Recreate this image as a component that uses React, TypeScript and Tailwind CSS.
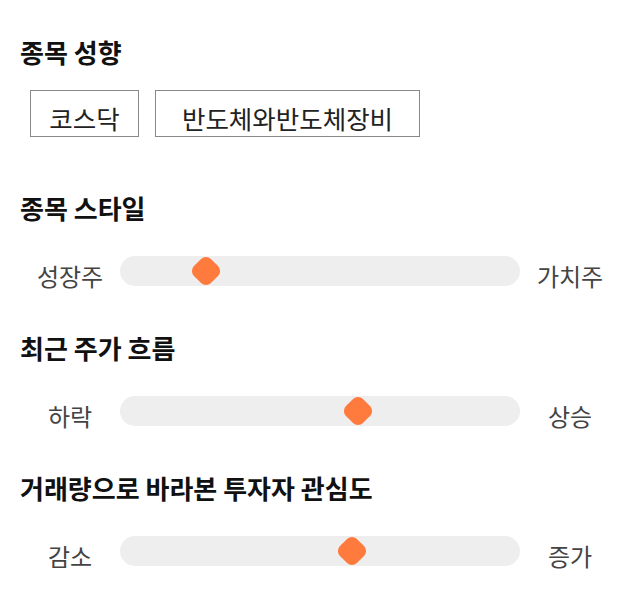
import React from "react"

const font = { fontFamily: '"Noto Sans CJK KR", "Noto Sans", sans-serif' }

interface SliderRowProps {
  left: string
  right: string
  value: number
}

function SliderRow({ left, right, value }: SliderRowProps) {
  return (
    <div className="flex items-center px-[10px]">
      <div className="w-[80px] pt-[10px] text-center text-[24px] leading-[30px] text-[#444]">{left}</div>
      <div className="relative mx-[10px] h-[30px] w-[400px] rounded-[15px] bg-[#eeeeee]">
        {/* thumb */}
        <div
          className="absolute top-1/2 h-[24px] w-[24px] -translate-x-1/2 -translate-y-1/2 rotate-45 rounded-[7px] bg-[#ff7a3d]"
          style={{ left: `${value}%` }}
        />
      </div>
      <div className="w-[80px] pt-[10px] text-center text-[24px] leading-[30px] text-[#444]">{right}</div>
    </div>
  )
}

export default function App() {
  return (
    <div className="w-[640px] h-[606px] bg-white px-5 pt-[36px]" style={font}>
      <h2 className="text-[26px] font-bold leading-[32px] text-[#111]">종목 성향</h2>
      <div className="mt-[22px] flex gap-4 px-[10px]">
        <div className="flex h-[47px] w-[109px] items-center justify-center border border-[#888] pt-[10px] text-[25.5px] text-[#222]">
          코스닥
        </div>
        <div className="flex h-[47px] w-[265px] items-center justify-center border border-[#888] pt-[10px] text-[25.5px] text-[#222]">
          반도체와반도체장비
        </div>
      </div>

      <h2 className="mt-[55px] text-[26px] font-bold leading-[32px] text-[#111]">종목 스타일</h2>
      <div className="mt-[27px]">
        <SliderRow left="성장주" right="가치주" value={21.5} />
      </div>

      <h2 className="mt-[41px] text-[26px] font-bold leading-[32px] text-[#111]">최근 주가 흐름</h2>
      <div className="mt-[27px]">
        <SliderRow left="하락" right="상승" value={59.5} />
      </div>

      <h2 className="mt-[41px] text-[26px] font-bold leading-[32px] text-[#111]">거래량으로 바라본 투자자 관심도</h2>
      <div className="mt-[27px]">
        <SliderRow left="감소" right="증가" value={58} />
      </div>
    </div>
  )
}
